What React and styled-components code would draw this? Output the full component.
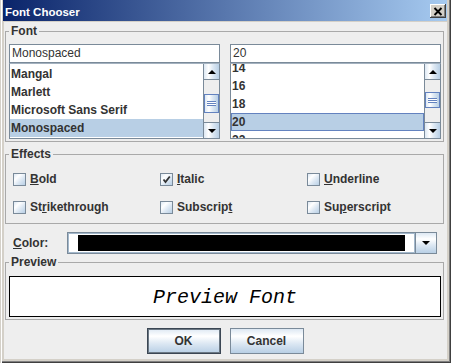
import React from "react";
import styled, { createGlobalStyle, css } from "styled-components";

const GlobalStyle = createGlobalStyle`
  html, body {
    margin: 0;
    padding: 0;
    background: #d4d0c8;
  }
  body {
    font-family: "Liberation Sans", Arial, sans-serif;
  }
`;

// Ocean-style gradient used for buttons, checkboxes, scroll arrows
const oceanGradient = (dir) => css`
  background: linear-gradient(${dir}, #dde8f3 0%, #ffffff 30%, #dde8f3 60%, #b8cfe5 100%);
`;

const Window = styled.div`
  width: 451px;
  height: 363px;
  box-sizing: border-box;
  display: flex;
  flex-direction: column;
  padding: 0 4px 4px 3px;
  background: #d4d0c8;
  box-shadow: inset 1px 0 #d4d0c8, inset 2px 0 #ffffff,
    inset -1px -1px #404040, inset -2px -2px #808080;
`;

const TitleBar = styled.div`
  height: 21px;
  flex: none;
  display: flex;
  align-items: center;
  justify-content: space-between;
  padding-left: 2px;
  margin-bottom: 1px;
  background: linear-gradient(to right, #0a246a, #a6caf0);
`;

const TitleText = styled.span`
  color: #ffffff;
  font-weight: bold;
  font-size: 11.5px;
  padding-top: 2px;
`;

const CloseButton = styled.div`
  width: 16px;
  height: 14px;
  margin-right: 1px;
  margin-top: 1px;
  display: flex;
  align-items: center;
  justify-content: center;
  background: #d4d0c8;
  box-shadow: inset -1px -1px #404040, inset 1px 1px #ffffff,
    inset -2px -2px #808080, inset 2px 2px #d4d0c8;
`;

const Body = styled.div`
  flex: 1;
  margin-left: 1px;
  padding: 2px 3px 0 1px;
  display: flex;
  flex-direction: column;
  background: #eeeeee;
`;

const Group = styled.fieldset`
  margin: ${(p) => p.$mt || 0}px 0 0;
  padding: ${(p) => p.$pt}px 2px ${(p) => p.$pb}px 3px;
  border: 1px solid #a9a9a9;
  min-width: 0;
`;

const Legend = styled.legend`
  padding: 0 2px;
  font-size: 12px;
  line-height: 14px;
  font-weight: bold;
  color: #333333;
`;

const FontColumns = styled.div`
  display: grid;
  grid-template-columns: 211px 211px;
  column-gap: 10px;
`;

const Column = styled.div`
  display: flex;
  flex-direction: column;
`;

const TextField = styled.div`
  height: 19px;
  box-sizing: border-box;
  border: 1px solid #7a8a99;
  background: #ffffff;
  padding: 0 2px;
  font-size: 12px;
  line-height: 17px;
  color: #333333;
`;

const ListBox = styled.div`
  height: 76px;
  box-sizing: border-box;
  border: 1px solid #7a8a99;
  border-top-color: #a3b1bf;
  display: flex;
  background: #ffffff;
`;

const ListViewport = styled.div`
  flex: 1;
  overflow: hidden;
`;

const ListInner = styled.div`
  margin-top: ${(p) => p.$offset}px;
`;

const ListRow = styled.div`
  height: 18px;
  box-sizing: border-box;
  padding-left: ${(p) => (p.$focused ? 1 : 1)}px;
  font-size: 12px;
  font-weight: bold;
  line-height: 18px;
  color: #333333;
  white-space: nowrap;
  background: ${(p) => (p.$selected ? "#b8cfe5" : "transparent")};
  ${(p) =>
    p.$focused &&
    css`
      border: 1px solid #6382bf;
      line-height: 16px;
      padding-left: 0;
    `}
`;

const ScrollBar = styled.div`
  width: 16px;
  flex: none;
  display: flex;
  flex-direction: column;
  border-left: 1px solid #7a8a99;
  box-sizing: border-box;
`;

const ScrollButton = styled.div`
  height: 16px;
  flex: none;
  box-sizing: border-box;
  display: flex;
  align-items: center;
  justify-content: center;
  ${oceanGradient("to right")}
  border-${(p) => (p.$up ? "bottom" : "top")}: 1px solid #7a8a99;
`;

const Arrow = styled.div`
  width: 0;
  height: 0;
  border-left: 4px solid transparent;
  border-right: 4px solid transparent;
  ${(p) =>
    p.$up
      ? css`
          border-bottom: 4px solid #000000;
        `
      : css`
          border-top: 4px solid #000000;
        `}
`;

const Track = styled.div`
  flex: 1;
  background: #eeeeee;
  display: flex;
  flex-direction: column;
`;

const Thumb = styled.div`
  box-sizing: border-box;
  border: 1px solid #6382bf;
  ${oceanGradient("to right")}
  display: flex;
  align-items: center;
  justify-content: center;
`;

const Grip = styled.div`
  width: 9px;
  height: 5px;
  background: repeating-linear-gradient(
    to bottom,
    #6382bf 0px,
    #6382bf 1px,
    #ffffff 1px,
    #ffffff 2px
  );
`;

const EffectsGrid = styled.div`
  display: grid;
  grid-template-columns: 147px 147px 1fr;
  grid-auto-rows: 28px;
  padding-left: 4px;
`;

const CheckItem = styled.div`
  display: flex;
  align-items: center;
  gap: 4px;
  font-size: 12px;
  font-weight: bold;
  color: #333333;
`;

const CheckBox = styled.div`
  width: 13px;
  height: 13px;
  box-sizing: border-box;
  border: 1px solid #7a8a99;
  ${oceanGradient("to bottom right")}
  display: flex;
  align-items: center;
  justify-content: center;
`;

const Mnemonic = styled.span`
  text-decoration: underline;
  text-underline-offset: 1px;
`;

const ColorRow = styled.div`
  margin: 8px 7px 0 8px;
  height: 22px;
  display: flex;
  align-items: center;
`;

const ColorLabel = styled.span`
  width: 54px;
  flex: none;
  font-size: 12px;
  font-weight: bold;
  color: #333333;
`;

const Combo = styled.div`
  flex: 1;
  height: 22px;
  box-sizing: border-box;
  border: 1px solid #7a8a99;
  display: flex;
  background: #ffffff;
`;

const ComboValue = styled.div`
  flex: 1;
  padding: 2px 10px 2px 10px;
  box-shadow: inset 0 0 0 1px #a3b8cc;
  display: flex;
`;

const Swatch = styled.div`
  flex: 1;
  background: #000000;
`;

const ComboButton = styled.div`
  width: 20px;
  flex: none;
  border-left: 1px solid #7a8a99;
  display: flex;
  align-items: center;
  justify-content: center;
  ${oceanGradient("to bottom")}
`;

const PreviewBox = styled.div`
  height: 41px;
  box-sizing: border-box;
  border: 1px solid #000000;
  background: #ffffff;
  display: flex;
  align-items: center;
  justify-content: center;
  padding-top: 2px;
`;

const PreviewText = styled.span`
  font-family: "Liberation Mono", "Courier New", monospace;
  font-style: italic;
  font-size: 20px;
  color: #000000;
`;

const ButtonRow = styled.div`
  margin: 8px 0 0 1px;
  display: flex;
  justify-content: center;
  gap: 9px;
`;

const Button = styled.div`
  width: 74px;
  height: 26px;
  box-sizing: border-box;
  display: flex;
  align-items: center;
  justify-content: center;
  font-size: 12px;
  font-weight: bold;
  color: #333333;
  ${oceanGradient("to bottom")}
  border: 1px solid ${(p) => (p.$default ? "#3b4653" : "#7a8a99")};
  ${(p) =>
    p.$default &&
    css`
      box-shadow: inset 0 0 0 1px #6b7884;
    `}
`;

const fonts = ["Mangal", "Marlett", "Microsoft Sans Serif", "Monospaced", "MS Gothic"];
const sizes = ["14", "16", "18", "20", "22"];

const effects = [
  { pre: "", key: "B", post: "old" },
  { pre: "", key: "I", post: "talic", checked: true },
  { pre: "", key: "U", post: "nderline" },
  { pre: "St", key: "r", post: "ikethrough" },
  { pre: "Subscrip", key: "t", post: "" },
  { pre: "Su", key: "p", post: "erscript" },
];

const Scroller = ({ thumbTop, thumbHeight }) => (
  <ScrollBar>
    <ScrollButton $up>
      <Arrow $up />
    </ScrollButton>
    <Track>
      <Thumb style={{ marginTop: thumbTop, height: thumbHeight }}>
        <Grip />
      </Thumb>
    </Track>
    <ScrollButton>
      <Arrow />
    </ScrollButton>
  </ScrollBar>
);

const List = ({ items, selected, focused, offset, thumbTop, thumbHeight }) => (
  <ListBox>
    <ListViewport>
      <ListInner $offset={offset}>
        {items.map((it) => (
          <ListRow key={it} $selected={it === selected} $focused={focused && it === selected}>
            {it}
          </ListRow>
        ))}
      </ListInner>
    </ListViewport>
    <Scroller thumbTop={thumbTop} thumbHeight={thumbHeight} />
  </ListBox>
);

export default function App() {
  return (
    <>
      <GlobalStyle />
      <Window>
        <TitleBar>
          <TitleText>Font Chooser</TitleText>
          <CloseButton>
            <svg width="10" height="9" viewBox="0 0 10 9">
              <path d="M1.5 1 L8.5 8 M8.5 1 L1.5 8" stroke="#000" strokeWidth="1.9" />
            </svg>
          </CloseButton>
        </TitleBar>
        <Body>
          <Group $pt={6} $pb={2}>
            <Legend>Font</Legend>
            <FontColumns>
              <Column>
                <TextField>Monospaced</TextField>
                <List items={fonts} selected="Monospaced" offset={1} thumbTop={14} thumbHeight={19} />
              </Column>
              <Column>
                <TextField>20</TextField>
                <List items={sizes} selected="20" focused offset={-5} thumbTop={12} thumbHeight={16} />
              </Column>
            </FontColumns>
          </Group>

          <Group $mt={5} $pt={4} $pb={2}>
            <Legend>Effects</Legend>
            <EffectsGrid>
              {effects.map((e) => (
                <CheckItem key={e.pre + e.key + e.post}>
                  <CheckBox>
                    {e.checked && (
                      <svg width="9" height="9" viewBox="0 0 9 9">
                        <path d="M1.5 4.5 L3.5 7 L7.8 1.5" stroke="#333" strokeWidth="1.8" fill="none" />
                      </svg>
                    )}
                  </CheckBox>
                  <span>
                    {e.pre}
                    <Mnemonic>{e.key}</Mnemonic>
                    {e.post}
                  </span>
                </CheckItem>
              ))}
            </EffectsGrid>
          </Group>

          <ColorRow>
            <ColorLabel>
              <Mnemonic>C</Mnemonic>olor:
            </ColorLabel>
            <Combo>
              <ComboValue>
                <Swatch />
              </ComboValue>
              <ComboButton>
                <Arrow />
              </ComboButton>
            </Combo>
          </ColorRow>

          <Group $mt={1} $pt={7} $pb={2}>
            <Legend>Preview</Legend>
            <PreviewBox>
              <PreviewText>Preview Font</PreviewText>
            </PreviewBox>
          </Group>

          <ButtonRow>
            <Button $default>OK</Button>
            <Button>Cancel</Button>
          </ButtonRow>
        </Body>
      </Window>
    </>
  );
}
